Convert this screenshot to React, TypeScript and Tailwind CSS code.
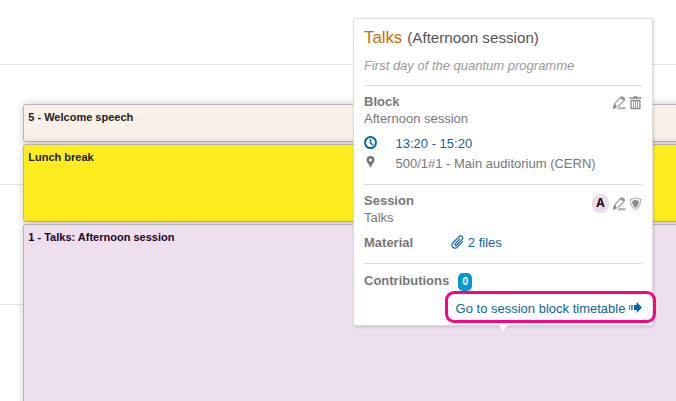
import type { ReactNode } from "react";

function Pencil() {
  return (
    <svg width="14" height="14" viewBox="0 0 14 14" className="shrink-0" fill="none">
      <path d="M2.600 7.900 8.200 1.700q1.500-1.500 3.300-.3 1.700 1.400.4 3.200L6.200 10.500" fill="#fff" stroke="#999" strokeWidth="1.200" />
      <path d="M8 2.300q1.700-2 3.600-.8 1.700 1.400.2 3.300Z" fill="#999" />
      <path d="M.6 13.300 1.900 7.900l1.800.4.5 1.900 2.200.6Z" fill="#8c8c8c" />
      <path d="M7 11.300h6.500v2H4.800Z" fill="#aaa" />
    </svg>
  );
}

function Trash() {
  return (
    <svg width="13" height="14" viewBox="0 0 13 14" className="shrink-0" fill="none">
      <path d="M.5 2h12M4.500 1h4" stroke="#8c8c8c" strokeWidth="1.500" />
      <path d="M2.100 4.500h8.800v8H2.100Z" stroke="#8c8c8c" strokeWidth="1.300" />
      <path d="M4.500 5v7M6.500 5v7M8.500 5v7" stroke="#999" />
    </svg>
  );
}

function Shield() {
  return (
    <svg width="13" height="14" viewBox="0 0 12 14" className="shrink-0">
      <path d="M6 .8q2.200 1.300 5 1.200.4 7.800-5 10.900Q.6 9.800 1 2 3.800 2.100 6 .8Z" fill="#fff" stroke="#999" strokeWidth=".9" />
      <path d="M6 2.800q1.500.9 3.400.9.1 4.900-3.400 7.200Q2.500 8.600 2.600 3.700 4.500 3.700 6 2.800Z" fill="#8c8c8c" />
    </svg>
  );
}

function Clock() {
  return (
    <svg width="14" height="14" viewBox="0 0 14 14" fill="none" stroke="#0b63a5">
      <circle cx="6.500" cy="6.600" r="5.500" strokeWidth="2" />
      <path d="M6.500 3v4l2.300 2.100" strokeWidth="1.500" />
    </svg>
  );
}

function Pin() {
  return (
    <svg width="9" height="12" viewBox="0 0 9 12">
      <path fillRule="evenodd" d="M4.500 0a4 4 0 0 1 4 4C8.500 6.500 6 8 4.500 12 3 8 .5 6.500.5 4a4 4 0 0 1 4-4Zm0 2.400a1.600 1.600 0 1 0 0 3.200 1.600 1.600 0 0 0 0-3.200Z" fill="#777" />
    </svg>
  );
}

function Clip() {
  return (
    <svg width="13" height="14" viewBox="0 0 13 14" fill="none" stroke="#0b63a5" strokeWidth="1.150" strokeLinecap="round">
      <path d="m8.800 3.900-4.500 4.700c-1 1.100.4 2.400 1.400 1.400l5.200-5.300c2.200-2.400-.8-5.100-3.100-2.900L2.200 7.500c-3.300 3.600 1.100 7.700 4.400 4.400l5-5.200" />
    </svg>
  );
}

function Arrow() {
  return (
    <svg width="13" height="11" viewBox="0 0 13 11" fill="#0b63a5">
      <path d="M0 3h1.200v5H0ZM2 3h1.800v5H2Z" opacity=".75" />
      <path d="M5 3h2.700V0L13 5.500 7.700 11V8H5Z" />
    </svg>
  );
}

function Event({ className, children }: { className: string; children: ReactNode }) {
  return (
    <div className={`shrink-0 rounded-[3px] border border-[#b4b4b4] pl-[4.300px] pt-[5px] text-[11px] font-bold leading-[15px] shadow-[0_0_8px_rgba(0,0,0,0.2)] ${className}`}>
      {children}
    </div>
  );
}

export default function App() {
  return (
    <div className="relative h-[401px] w-[676px] overflow-hidden bg-white font-['Liberation_Sans',Arial,sans-serif] text-[13px] text-[#777]">
      <div className="absolute inset-0 flex flex-col">
        <div className="h-[65px] border-b border-[#e5e5e5]" />
        <div className="h-[120px] border-b border-[#e5e5e5]" />
        <div className="h-[120px] border-b border-[#e5e5e5]" />
      </div>

      <main className="relative flex w-[700px] flex-col gap-[2px] pl-[23px] pt-[104px]">
        <Event className="h-[38px] bg-[#f9f0e7] text-[#222]">5 - Welcome speech</Event>
        <Event className="h-[78px] bg-[#feec1f] text-[#202020]">Lunch break</Event>
        <Event className="h-[200px] bg-[#eddfee] text-[#1d041f]">1 - Talks: Afternoon session</Event>
      </main>

      <aside className="absolute left-[353px] top-[18px] flex h-[308px] w-[300px] flex-col rounded-[2px] border border-[#dcdcdc] bg-white px-[10px] shadow-[1px_1px_3px_rgba(0,0,0,0.14)]">
        <h1 className="flex h-[38px] items-baseline gap-[5px] pt-[7px] text-[15.200px] leading-6 text-[#555]">
          <span className="text-[16.800px] text-[#cb6c08]">Talks</span>
          <span>(Afternoon session)</span>
        </h1>
        <p className="h-[28px] leading-[18px] italic text-[#999]">First day of the quantum programme</p>

        <section className="h-[99px] border-t border-[#ddd] pt-[7px]">
          <div className="flex h-[17px] items-center justify-between">
            <h2 className="font-bold leading-[17px]">Block</h2>
            <div className="flex items-center gap-[3px] pt-[3px]"><Pencil /><Trash /></div>
          </div>
          <p className="leading-[17px]">Afternoon session</p>
          <div className="mt-[7px] flex h-5 items-center text-[#0b63a5]">
            <span className="w-[31.500px] pb-[3px]"><Clock /></span>13:20 - 15:20
          </div>
          <div className="flex h-5 items-center">
            <span className="w-[31.500px] pb-[5px] pl-[2px]"><Pin /></span>500/1#1 - Main auditorium (CERN)
          </div>
        </section>

        <section className="h-[79px] border-t border-[#ddd] pt-[7px]">
          <div className="flex h-[17px] items-center justify-between">
            <h2 className="font-bold leading-[17px]">Session</h2>
            <div className="flex items-center gap-[3px] pt-[6px]">
              <span className="flex h-[19px] w-[17px] items-center justify-center rounded-full border border-[#ddd] bg-[#eddfee] pb-[2px] font-['Open_Sans','Noto_Sans',sans-serif] text-[12px] font-bold leading-none text-[#1d041f]">A</span>
              <Pencil /><Shield />
            </div>
          </div>
          <p className="leading-[17px]">Talks</p>
          <div className="mt-[8px] flex h-[18px] items-center">
            <span className="w-[86.800px] font-bold">Material</span>
            <span className="flex items-center gap-1 text-[#0b63a5]"><span className="pb-[2px]"><Clip /></span>2 files</span>
          </div>
        </section>

        <section className="border-t border-[#ddd] pt-[8px]">
          <div className="flex h-[19px] items-start gap-[9px]">
            <h2 className="font-bold leading-[18px]">Contributions</h2>
            <span className="mt-px flex h-[18px] w-[14px] items-center justify-center rounded-[5px] bg-[#0099ce] pb-px text-[11px] font-bold leading-none text-white">0</span>
          </div>
          <div className="mt-[9px] flex h-[18px] items-center justify-end gap-[3.600px] text-[#0b63a5]">
            Go to session block timetable<span className="pb-[3px]"><Arrow /></span>
          </div>
        </section>
        <span className="absolute left-[145px] top-[306px] h-[6px] w-[8px] bg-white [clip-path:polygon(0_0,100%_0,50%_100%)]" />
      </aside>
      <div className="absolute left-[445px] top-[291px] h-[32px] w-[211px] rounded-[9px] border-[3px] border-[#ff0084]" />
    </div>
  );
}
